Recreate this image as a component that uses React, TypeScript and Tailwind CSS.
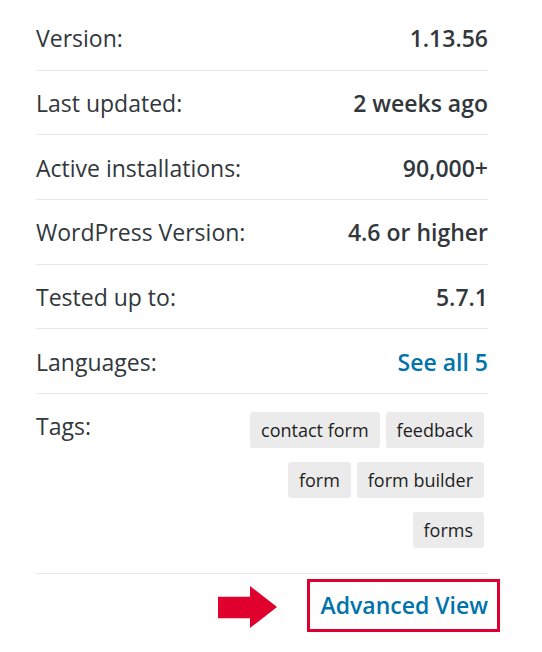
import * as React from "react";

interface MetaRow {
  label: string;
  value: string;
  link?: boolean;
}

const ROWS: MetaRow[] = [
  { label: "Version:", value: "1.13.56" },
  { label: "Last updated:", value: "2 weeks ago" },
  { label: "Active installations:", value: "90,000+" },
  { label: "WordPress Version:", value: "4.6 or higher" },
  { label: "Tested up to:", value: "5.7.1" },
  { label: "Languages:", value: "See all 5", link: true },
];

const TAGS = ["contact form", "feedback", "form", "form builder", "forms"];

export default function App() {
  return (
    <div
      className="w-[542px] h-[652px] bg-white text-[#32373c] overflow-hidden"
      style={{ fontFamily: '"Open Sans", "Noto Sans", sans-serif' }}
    >
      <div className="ml-[36px] w-[452px] pt-[6px]">
        {/* Meta rows */}
        {ROWS.map((row) => (
          <div
            key={row.label}
            className="h-[64.7px] flex items-center justify-between border-b border-[#e8e8e8] text-[23px] leading-[34px] pt-[1px]"
          >
            <span>{row.label}</span>
            {row.link ? (
              <a href="#" className="font-semibold text-[#0073aa]">
                {row.value}
              </a>
            ) : (
              <span className="font-semibold">{row.value}</span>
            )}
          </div>
        ))}

        {/* Tags */}
        <div className="h-[179.7px] flex justify-between border-b border-[#e8e8e8] pt-[15px]">
          <span className="text-[23px] leading-[34px]">Tags:</span>
          <div className="w-[240px] mr-[4px] mt-[3px] flex flex-wrap justify-end content-start gap-x-[6px] gap-y-[14px]">
            {TAGS.map((tag) => (
              <a
                key={tag}
                href="#"
                className="h-[36px] px-[11px] flex items-center rounded-[3px] bg-[#ebebeb] text-[18px] text-[#1e1e1e]"
              >
                {tag}
              </a>
            ))}
          </div>
        </div>

        {/* Advanced view link with annotation */}
        <div className="mt-[5px] flex items-center justify-end -mr-[12px]">
          <svg width="59" height="42" viewBox="0 0 59 42" className="mr-[30px] mt-[3px]">
            <path d="M0 10.7 H32 V0 L59 21 L32 42 V32.3 H0 Z" fill="#e0002d" />
          </svg>
          <a
            href="#"
            className="h-[53px] pl-[11px] pr-[9px] flex items-center border-[3px] border-[#dc0030] text-[23px] font-semibold text-[#0073aa]"
          >
            Advanced View
          </a>
        </div>
      </div>
    </div>
  );
}
